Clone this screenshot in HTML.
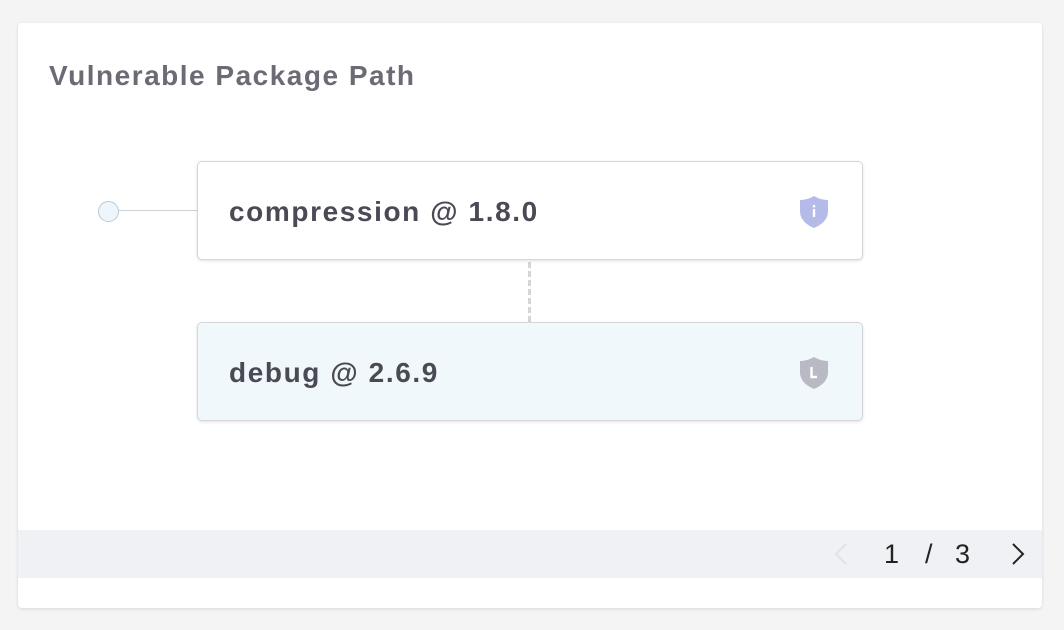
<!DOCTYPE html>
<html><head><style>
body{margin:0;width:1064px;height:630px;background:#f4f4f5;font-family:"Liberation Sans",sans-serif;position:relative;overflow:hidden}
.card{position:absolute;left:18px;top:23px;width:1024px;height:585px;background:#fff;border-radius:4px;box-shadow:0 1px 3px rgba(0,0,0,.12)}
.title{position:absolute;left:49px;top:60px;font-size:28px;font-weight:bold;color:#6b6b76;letter-spacing:1.5px}
.box{position:absolute;left:197px;width:666px;height:99px;border:1px solid #d6d6da;border-radius:5px;box-shadow:0 1px 3px rgba(0,0,0,.12);font-size:28px;font-weight:bold;color:#4a4a55;box-sizing:border-box;padding-left:31px;line-height:99px;letter-spacing:1.6px}
.ic{position:absolute;left:600px;top:33px}
.foot{position:absolute;left:18px;top:530px;width:1024px;height:48px;background:#f0f1f5}
</style></head><body>
<div class="card"></div>
<div class="title">Vulnerable Package Path</div>
<div style="position:absolute;left:98px;top:201px;width:19px;height:19px;border:1px solid #b9c9d6;border-radius:50%;background:#eef6fb"></div>
<div style="position:absolute;left:119px;top:210px;width:78px;height:1px;background:#cfcfd4"></div>
<div style="position:absolute;left:528px;top:262px;height:60px;border-left:3px dashed #d6d6da"></div>
<div class="box" style="top:161px;background:#fff">compression @ 1.8.0
<svg class="ic" width="32" height="34" viewBox="0 0 32 34"><path d="M16 1 C11 4 6 5 2 5 V16 C2 25 9 30 16 33 C23 30 30 25 30 16 V5 C26 5 21 4 16 1Z" fill="#b4bbe8"/><rect x="14.8" y="14" width="2.4" height="8" fill="#fff"/><rect x="14.8" y="10" width="2.4" height="2.4" fill="#fff"/></svg></div>
<div class="box" style="top:322px;background:#f1f8fc">debug @ 2.6.9
<svg class="ic" width="32" height="34" viewBox="0 0 32 34"><path d="M16 1 C11 4 6 5 2 5 V16 C2 25 9 30 16 33 C23 30 30 25 30 16 V5 C26 5 21 4 16 1Z" fill="#b8b9c2"/><path d="M13.5 11 V21 H19" stroke="#fff" stroke-width="2.4" fill="none"/></svg></div>
<div class="foot">
<svg style="position:absolute;left:815px;top:12px" width="16" height="24"><path d="M13 2 L3 12 L13 22" stroke="#e2e2e6" stroke-width="2" fill="none"/></svg>
<div style="position:absolute;left:866px;top:9px;font-size:27px;color:#222">1</div>
<div style="position:absolute;left:907px;top:9px;font-size:27px;color:#222">/</div>
<div style="position:absolute;left:937px;top:9px;font-size:27px;color:#222">3</div>
<svg style="position:absolute;left:992px;top:12px" width="16" height="24"><path d="M3 2 L13 12 L3 22" stroke="#222" stroke-width="2" fill="none"/></svg>
</div>
</body></html>
